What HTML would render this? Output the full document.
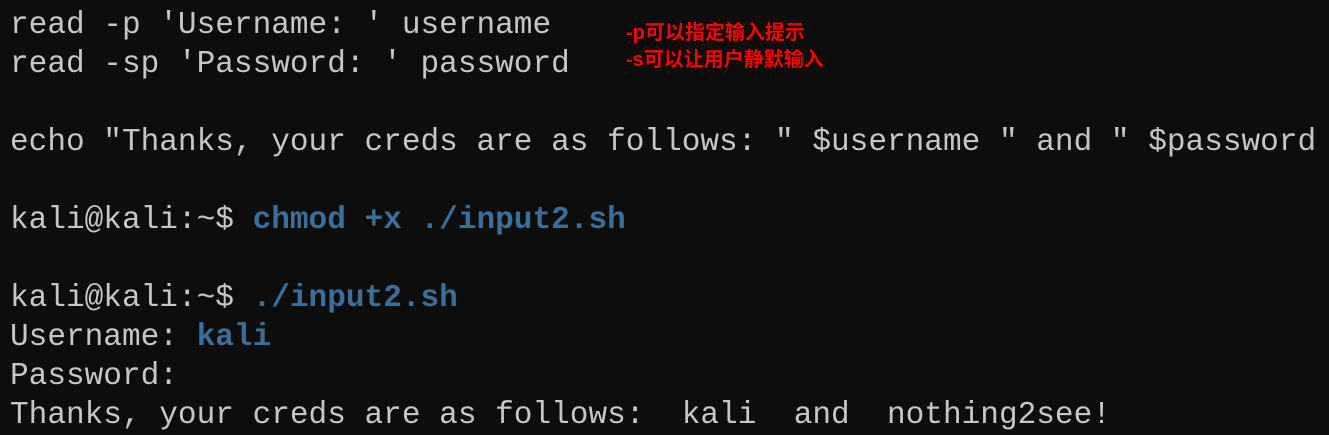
<!DOCTYPE html>
<html><head><meta charset="utf-8"><style>
html,body{margin:0;padding:0;background:#0d0d0d;width:1329px;height:428px;overflow:hidden}
.t{position:absolute;left:10px;top:6px;font-family:"Liberation Mono",monospace;font-size:31.1px;line-height:39px;color:#c6c6c6;white-space:pre}
b{color:#3b6f99;font-weight:bold}
.a{position:absolute;left:626px;font-family:"Liberation Sans","Noto Sans CJK SC",sans-serif;font-weight:bold;font-size:20px;color:#ff0000;line-height:24px}
</style></head><body>
<div class="t">read -p 'Username: ' username
read -sp 'Password: ' password

echo "Thanks, your creds are as follows: " $username " and " $password

kali@kali:~$ <b>chmod +x ./input2.sh</b>

kali@kali:~$ <b>./input2.sh</b>
Username: <b>kali</b>
Password:
Thanks, your creds are as follows:  kali  and  nothing2see!</div>
<div class="a" style="top:21px">-p可以指定输入提示</div>
<div class="a" style="top:48px">-s可以让用户静默输入</div>
</body></html>
